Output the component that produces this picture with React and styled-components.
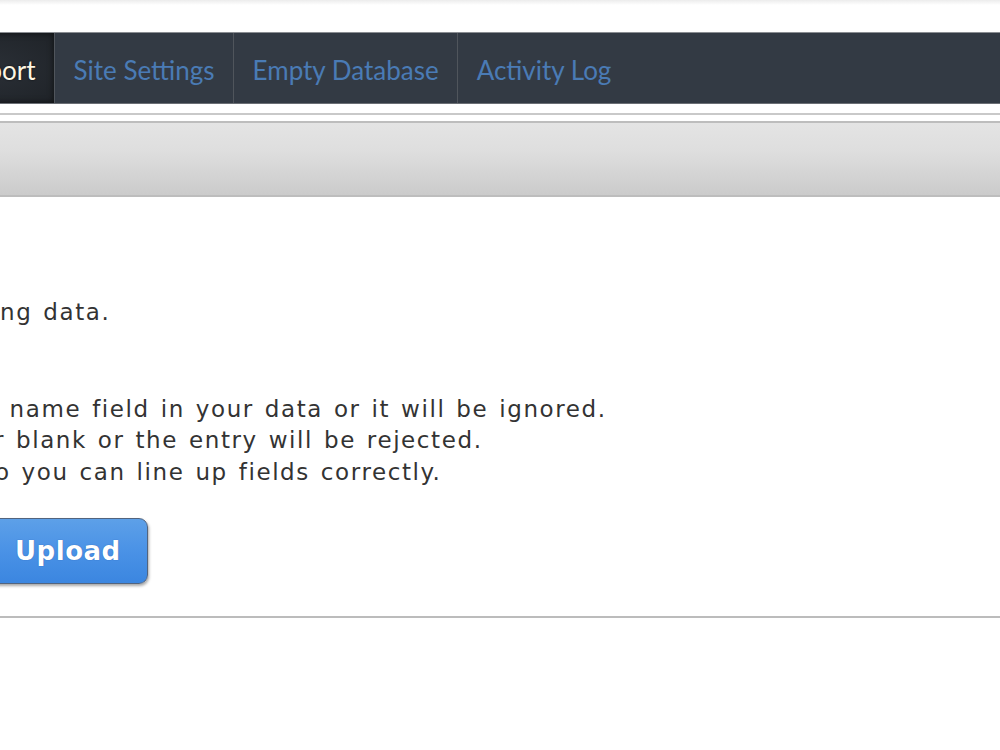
import React from 'react';
import styled, { createGlobalStyle } from 'styled-components';

const Global = createGlobalStyle`
  html, body {
    margin: 0;
    padding: 0;
    background: #fff;
    overflow: hidden;
  }
  body {
    font-family: "DejaVu Sans", Verdana, sans-serif;
  }
`;

const Page = styled.div`
  width: 1000px;
  height: 750px;
  overflow: hidden;
  background: linear-gradient(to bottom, #ececec 0px, #fff 5px, #fff 100%);
  padding-top: 32px;
  box-sizing: border-box;
`;

const Nav = styled.nav`
  display: flex;
  height: 70px;
  background: #333a44;
  border-top: 1px solid #8a8d92;
  border-bottom: 1px solid #6b6f75;
`;

const Tab = styled.a`
  display: flex;
  align-items: center;
  padding: 3px 18px 0 19px;
  margin-left: ${p => (p.first ? '-60px' : '0')};
  border-right: ${p => (p.last ? 'none' : '1px solid #50555c')};
  font-family: Lato, "Open Sans", sans-serif;
  font-size: 26px;
  color: ${p => (p.active ? '#fdf6e3' : '#4a7bb5')};
  background: ${p =>
    p.active
      ? 'radial-gradient(ellipse at 40% 50%, #2b3037 0%, #1f2328 100%)'
      : 'transparent'};
  box-shadow: ${p => (p.active ? 'inset 0 0 6px rgba(0,0,0,0.6)' : 'none')};
  text-shadow: ${p => (p.active ? '0 0 2px rgba(0,0,0,0.8)' : 'none')};
  text-decoration: none;
  cursor: pointer;
`;

const Rule = styled.div`
  margin-top: 9px;
  height: 2px;
  background: #c9c9c9;
`;

const Bar = styled.div`
  margin-top: 6px;
  height: 72px;
  border-top: 2px solid #bdbdbd;
  border-bottom: 2px solid #bdbdbd;
  background: linear-gradient(to bottom, #e4e4e4 0%, #dedede 40%, #cbcbcb 100%);
`;

const Body = styled.div`
  padding-top: 100px;
  color: #333;
  font-size: 23px;
  letter-spacing: 1.6px;
  word-spacing: 2px;
`;

const Line = styled.p`
  margin: 0;
  line-height: 31.5px;
  white-space: nowrap;
  margin-left: ${p => p.shift || 0}px;
`;

const Spacer = styled.div`
  height: ${p => p.h}px;
`;

const Button = styled.button`
  margin-left: -22px;
  height: 66px;
  padding: 0 26px 0 36px;
  border: 1px solid #52647e;
  border-radius: 9px;
  background: linear-gradient(to bottom, #5da0e8 0%, #4a92e6 50%, #3b86e0 100%);
  box-shadow: 1px 2px 3px rgba(0, 0, 0, 0.35);
  color: #fff;
  font-family: "DejaVu Sans", Verdana, sans-serif;
  font-weight: bold;
  font-size: 26px;
  letter-spacing: 0.5px;
  text-shadow: 0 0 1px rgba(0, 40, 120, 0.6);
  cursor: pointer;
`;

const Divider = styled.hr`
  margin: 32px 0 0;
  border: 0;
  height: 2px;
  background: #bcbcbc;
`;

export default function App() {
  return (
    <>
      <Global />
      <Page>
        <Nav>
          <Tab first active>Import</Tab>
          <Tab>Site Settings</Tab>
          <Tab>Empty Database</Tab>
          <Tab last>Activity Log</Tab>
        </Nav>
        <Rule />
        <Bar />
        <Body>
          <Line shift={-8}>ing data.</Line>
          <Spacer h={65} />
          <Line shift={-17}>a name field in your data or it will be ignored.</Line>
          <Line shift={-6}>r blank or the entry will be rejected.</Line>
          <Line shift={-5}>o you can line up fields correctly.</Line>
          <Spacer h={30} />
          <Button>Upload</Button>
          <Divider />
        </Body>
      </Page>
    </>
  );
}
